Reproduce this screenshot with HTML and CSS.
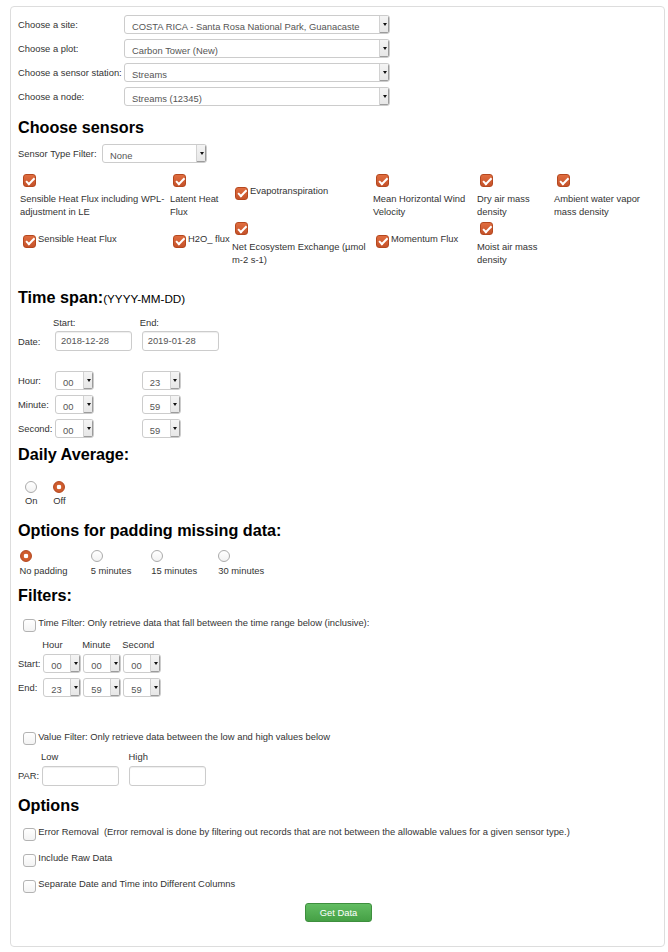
FILE: index.html
```html
<!DOCTYPE html>
<html>
<head>
<meta charset="utf-8">
<title>Data download</title>
<link rel="stylesheet" href="styles.css">
</head>
<body>
<div class="panel">
  <div class="site-grid">
    <span class="lbl">Choose a site:</span>
    <div class="sel"><span class="val">COSTA RICA - Santa Rosa National Park, Guanacaste</span><span class="arr"></span></div>
    <span class="lbl">Choose a plot:</span>
    <div class="sel"><span class="val">Carbon Tower (New)</span><span class="arr"></span></div>
    <span class="lbl">Choose a sensor station:</span>
    <div class="sel"><span class="val">Streams</span><span class="arr"></span></div>
    <span class="lbl">Choose a node:</span>
    <div class="sel"><span class="val">Streams (12345)</span><span class="arr"></span></div>
  </div>

  <h2 class="h h-sensors">Choose sensors</h2>
  <div class="filter-row">
    <span class="lbl">Sensor Type Filter:</span>
    <div class="sel sel-filter"><span class="val">None</span><span class="arr"></span></div>
  </div>

  <div class="sensor-grid">
    <div class="cell stack"><span class="cb on"></span><span class="txt">Sensible Heat Flux including WPL-adjustment in LE</span></div>
    <div class="cell stack"><span class="cb on"></span><span class="txt">Latent Heat Flux</span></div>
    <div class="cell inline"><span class="cb on"></span><span class="txt">Evapotranspiration</span></div>
    <div class="cell stack"><span class="cb on"></span><span class="txt">Mean Horizontal Wind Velocity</span></div>
    <div class="cell stack"><span class="cb on"></span><span class="txt">Dry air mass density</span></div>
    <div class="cell stack"><span class="cb on"></span><span class="txt">Ambient water vapor mass density</span></div>
    <div class="cell inline"><span class="cb on"></span><span class="txt">Sensible Heat Flux</span></div>
    <div class="cell inline"><span class="cb on"></span><span class="txt">H2O_ flux</span></div>
    <div class="cell stack"><span class="cb on"></span><span class="txt">Net Ecosystem Exchange (µmol m-2 s-1)</span></div>
    <div class="cell inline"><span class="cb on"></span><span class="txt">Momentum Flux</span></div>
    <div class="cell stack"><span class="cb on"></span><span class="txt">Moist air mass density</span></div>
  </div>

  <h2 class="h h-time">Time span:<span class="fmt">(YYYY-MM-DD)</span></h2>
  <div class="date-grid">
    <span></span><span class="sub">Start:</span><span class="sub">End:</span>
    <span class="lbl">Date:</span><div class="inp">2018-12-28</div><div class="inp">2019-01-28</div>
  </div>
  <div class="clock-grid">
    <span class="lbl">Hour:</span>
    <div class="sel sm"><span class="val">00</span><span class="arr"></span></div>
    <div class="sel sm"><span class="val">23</span><span class="arr"></span></div>
    <span class="lbl">Minute:</span>
    <div class="sel sm"><span class="val">00</span><span class="arr"></span></div>
    <div class="sel sm"><span class="val">59</span><span class="arr"></span></div>
    <span class="lbl">Second:</span>
    <div class="sel sm"><span class="val">00</span><span class="arr"></span></div>
    <div class="sel sm"><span class="val">59</span><span class="arr"></span></div>
  </div>

  <h2 class="h h-daily">Daily Average:</h2>
  <div class="radio-row daily">
    <div class="ropt"><span class="rd"></span><span>On</span></div>
    <div class="ropt"><span class="rd on"></span><span>Off</span></div>
  </div>

  <h2 class="h h-pad">Options for padding missing data:</h2>
  <div class="radio-row padding">
    <div class="ropt"><span class="rd on"></span><span>No padding</span></div>
    <div class="ropt"><span class="rd"></span><span>5 minutes</span></div>
    <div class="ropt"><span class="rd"></span><span>15 minutes</span></div>
    <div class="ropt"><span class="rd"></span><span>30 minutes</span></div>
  </div>

  <h2 class="h h-filters">Filters:</h2>
  <div class="check-row time-filter"><span class="cb"></span><span class="txt">Time Filter: Only retrieve data that fall between the time range below (inclusive):</span></div>
  <div class="tf-grid">
    <span></span><span class="sub">Hour</span><span class="sub">Minute</span><span class="sub">Second</span>
    <span class="lbl">Start:</span>
    <div class="sel xs"><span class="val">00</span><span class="arr"></span></div>
    <div class="sel xs"><span class="val">00</span><span class="arr"></span></div>
    <div class="sel xs"><span class="val">00</span><span class="arr"></span></div>
    <span class="lbl">End:</span>
    <div class="sel xs"><span class="val">23</span><span class="arr"></span></div>
    <div class="sel xs"><span class="val">59</span><span class="arr"></span></div>
    <div class="sel xs"><span class="val">59</span><span class="arr"></span></div>
  </div>

  <div class="check-row value-filter"><span class="cb"></span><span class="txt">Value Filter: Only retrieve data between the low and high values below</span></div>
  <div class="vf-grid">
    <span></span><span class="sub">Low</span><span class="sub">High</span>
    <span class="lbl">PAR:</span><div class="inp"></div><div class="inp"></div>
  </div>

  <h2 class="h h-options">Options</h2>
  <div class="check-row opt first"><span class="cb"></span><span class="txt">Error Removal&nbsp; (Error removal is done by filtering out records that are not between the allowable values for a given sensor type.)</span></div>
  <div class="check-row opt"><span class="cb"></span><span class="txt">Include Raw Data</span></div>
  <div class="check-row opt"><span class="cb"></span><span class="txt">Separate Date and Time into Different Columns</span></div>

  <div class="actions"><button class="btn" type="button">Get Data</button></div>
</div>
</body>
</html>
```
FILE: styles.css
```css
body {
  margin: 0;
  background: #fff;
  font-family: "Liberation Sans", Arial, sans-serif;
  font-size: 9.4px;
  line-height: 13px;
  color: #333;
}

.panel {
  margin: 6px 3px 0 10px;
  border: 1px solid #ddd;
  border-radius: 4px;
  padding: 8px 7px 24px;
}

.lbl { white-space: nowrap; }

/* select boxes */
.site-grid {
  display: grid;
  grid-template-columns: 106px 266px;
  row-gap: 5px;
  align-items: center;
}
.sel {
  display: flex;
  height: 19px;
  box-sizing: border-box;
  border: 1px solid #ccc;
  border-radius: 3px;
  background: #fff;
  color: #555;
  overflow: hidden;
}
.sel .val {
  flex: 1;
  padding: 4px 0 0 7px;
  white-space: nowrap;
  overflow: hidden;
}
.sel .arr {
  flex: none;
  width: 9px;
  background: linear-gradient(#f4f4f4, #e6e6e6);
  border-left: 1px solid #d2d2d2;
  box-shadow: inset -1px -1px 0 #9c9c9c;
  display: flex;
  align-items: center;
  justify-content: center;
}
.sel .arr::before {
  content: "";
  border-left: 2.5px solid transparent;
  border-right: 2.5px solid transparent;
  border-top: 3px solid #111;
}
.sel.sm { width: 39px; }
.sel.xs { width: 38px; }
.sel-filter { width: 105px; }

/* headings */
.h {
  margin: 0;
  font-size: 16.2px;
  line-height: 20px;
  font-weight: bold;
  color: #000;
}
.h .fmt {
  font-size: 11.7px;
  font-weight: normal;
}
.h-sensors { margin-top: 11px; }
.h-time { margin-top: 21px; }
.h-daily { margin-top: 6px; }
.h-pad { margin-top: 13px; }
.h-filters { margin-top: 8px; }
.h-options { margin-top: 9.5px; }

.filter-row {
  margin-top: 7px;
  display: grid;
  grid-template-columns: 84px 105px;
  align-items: center;
}

/* checkboxes */
.cb {
  position: relative;
  display: inline-block;
  flex: none;
  width: 13px;
  height: 13px;
  box-sizing: border-box;
  border: 1px solid #b3b3b3;
  border-radius: 3px;
  background: linear-gradient(#fff, #f3f3f3);
}
.cb.on {
  border-color: #b5481f;
  background: linear-gradient(#e06d3f, #c5522a);
}
.cb.on::after {
  content: "";
  position: absolute;
  left: 3.5px;
  top: 0.5px;
  width: 3px;
  height: 6.5px;
  border: solid #fff;
  border-width: 0 2px 2px 0;
  transform: rotate(45deg);
}

.sensor-grid {
  margin: 11px 0 0 2px;
  display: grid;
  grid-template-columns: 150px 62px 141px 104px 77px 95px;
  row-gap: 4px;
  align-items: start;
}
.cell.stack .cb { display: block; margin-left: 3px; }
.cell.stack .txt { display: block; margin-top: 5px; }
.cell.inline { display: flex; margin-top: 10px; }
.cell.inline .cb { margin: 2.5px 0 0 3px; }
.cell.inline .txt { margin-left: 2px; }

/* time span */
.date-grid,
.clock-grid {
  display: grid;
  grid-template-columns: 37px 86.7px auto;
  align-items: center;
}
.date-grid { margin-top: 7px; row-gap: 2px; }
.date-grid .sub { margin-left: -2px; }
.clock-grid { margin-top: 20px; row-gap: 5px; }
.clock-grid .sel { justify-self: start; }

.inp {
  width: 77px;
  height: 20px;
  box-sizing: border-box;
  border: 1px solid #ccc;
  border-radius: 3px;
  box-shadow: inset 0 1px 1px rgba(0, 0, 0, 0.07);
  color: #555;
  padding-left: 5px;
  line-height: 18px;
}

/* radios */
.radio-row { display: grid; }
.radio-row.daily {
  margin: 17px 0 0 7px;
  grid-template-columns: 28.3px auto;
}
.radio-row.padding {
  margin: 10px 0 0 1.5px;
  grid-template-columns: 71.2px 60.6px 67px auto;
}
.ropt {
  display: flex;
  flex-direction: column;
  align-items: flex-start;
}
.daily .ropt .rd { margin-bottom: 1px; }
.padding .ropt .rd { margin-bottom: 2px; }
.rd {
  display: block;
  width: 12px;
  height: 12px;
  box-sizing: border-box;
  border: 1px solid #ababab;
  border-radius: 50%;
  background: linear-gradient(#fff, #f2f2f2);
}
.rd.on {
  border-color: #b5481f;
  background: radial-gradient(circle, #fff 0 2px, #d2602f 2.6px, #c5522a 100%);
}

/* filters */
.check-row { display: flex; }
.check-row .cb { margin: 2.5px 0 0 5.3px; }
.check-row .txt { margin-left: 2px; }
.time-filter { margin-top: 11px; }
.tf-grid {
  margin-top: 6px;
  display: grid;
  grid-template-columns: 25.3px 40px 40px 38px;
  grid-template-rows: 11px 19px 19px;
  row-gap: 5px;
  align-items: center;
}
.tf-grid .sub { margin: 3px 0 0 -1px; }

.value-filter { margin-top: 33px; }
.vf-grid {
  margin-top: 5px;
  display: grid;
  grid-template-columns: 23.7px 87.6px auto;
  row-gap: 3px;
  align-items: center;
}
.vf-grid .sub { margin-left: -0.7px; }
.vf-grid .inp { height: 19.5px; }

/* options */
.opt.first { margin-top: 10px; }
.opt + .opt { margin-top: 10.5px; }

.actions {
  display: flex;
  justify-content: center;
  margin-top: 10px;
  padding-left: 2px;
}
.btn {
  width: 67px;
  height: 19px;
  padding: 0;
  border: 1px solid #3e8f3e;
  border-radius: 3px;
  background: linear-gradient(#62bd62, #45a045);
  color: #fff;
  font-family: "Liberation Sans", Arial, sans-serif;
  font-size: 9.4px;
  line-height: 17px;
  cursor: pointer;
}
```
